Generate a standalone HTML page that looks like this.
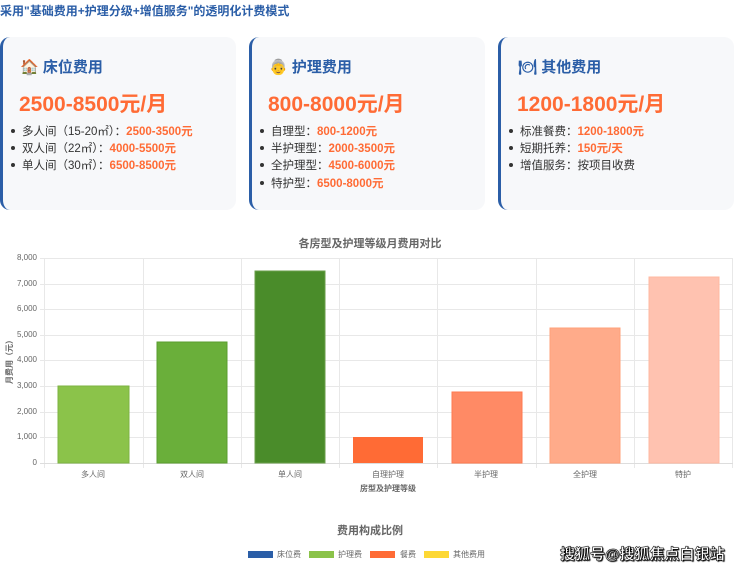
<!DOCTYPE html>
<html><head><meta charset="utf-8"><style>
*{margin:0;padding:0;box-sizing:border-box}
body{width:740px;height:568px;background:#fff;font-family:"Liberation Sans","Noto Sans CJK SC",sans-serif;position:relative;overflow:hidden}
.a{position:absolute;white-space:nowrap}
.top{left:0;top:2px;font-size:12px;color:#2b5ea7;font-weight:bold}
.card{position:absolute;top:37px;width:236px;height:173px;background:#f7f8fa;border-radius:10px;border-left:3px solid #2b5ea7}
.card h3{position:absolute;left:17px;top:19px;font-size:15px;color:#2b5ea7;font-weight:bold}
.card .p{position:absolute;left:16px;top:51px;font-size:21px;color:#ff6b35;font-weight:bold}
.card ul{position:absolute;left:17px;top:87px;list-style:none;font-size:11.5px;color:#333;line-height:17.2px}
.card li:before{content:"";display:inline-block;width:4px;height:4px;border-radius:2px;background:#333;margin:0 7px 2px -9px;vertical-align:middle}
.card li b{color:#ff6b35}
.yl{position:absolute;right:703px;font-size:8px;color:#666}
.xl{position:absolute;top:469px;font-size:8px;color:#666;width:98px;text-align:center}
.lg{position:absolute;top:551px;width:25px;height:7px}
.lt{position:absolute;top:549px;font-size:8px;color:#666}
</style></head><body>
<div class="a top">采用"基础费用+护理分级+增值服务"的透明化计费模式</div>

<div class="card" style="left:0">
<h3>🏠 床位费用</h3>
<div class="p">2500-8500元/月</div>
<ul><li>多人间（15-20㎡）：<b>2500-3500元</b></li><li>双人间（22㎡）：<b>4000-5500元</b></li><li>单人间（30㎡）：<b>6500-8500元</b></li></ul>
</div>
<div class="card" style="left:249px">
<h3>👵 护理费用</h3>
<div class="p">800-8000元/月</div>
<ul><li>自理型：<b>800-1200元</b></li><li>半护理型：<b>2000-3500元</b></li><li>全护理型：<b>4500-6000元</b></li><li>特护型：<b>6500-8000元</b></li></ul>
</div>
<div class="card" style="left:498px">
<h3>🍽 其他费用</h3>
<div class="p">1200-1800元/月</div>
<ul><li>标准餐费：<b>1200-1800元</b></li><li>短期托养：<b>150元/天</b></li><li>增值服务：按项目收费</li></ul>
</div>

<div class="a" style="left:0;width:740px;text-align:center;top:235px;font-size:11px;font-weight:bold;color:#666">各房型及护理等级月费用对比</div>

<svg class="a" style="left:0;top:0" width="740" height="568">
<g stroke="#e8e8e8" stroke-width="1">
<line x1="40" y1="258.5" x2="733" y2="258.5"/><line x1="40" y1="284.5" x2="733" y2="284.5"/><line x1="40" y1="309.5" x2="733" y2="309.5"/><line x1="40" y1="335.5" x2="733" y2="335.5"/><line x1="40" y1="360.5" x2="733" y2="360.5"/><line x1="40" y1="386.5" x2="733" y2="386.5"/><line x1="40" y1="412.5" x2="733" y2="412.5"/><line x1="40" y1="437.5" x2="733" y2="437.5"/>
<line x1="44.5" y1="258" x2="44.5" y2="468"/><line x1="143.5" y1="258" x2="143.5" y2="468"/><line x1="241.5" y1="258" x2="241.5" y2="468"/><line x1="339.5" y1="258" x2="339.5" y2="468"/><line x1="437.5" y1="258" x2="437.5" y2="468"/><line x1="536.5" y1="258" x2="536.5" y2="468"/><line x1="634.5" y1="258" x2="634.5" y2="468"/><line x1="732.5" y1="258" x2="732.5" y2="468"/>
</g>
<line x1="40" y1="463.5" x2="733" y2="463.5" stroke="#ddd"/>
<rect x="58" y="386" width="71" height="77" fill="#8bc34a" stroke="#7cb342"/>
<rect x="157" y="342" width="70" height="121" fill="#6aaf3a" stroke="#5a9e2f"/>
<rect x="255" y="271" width="70" height="192" fill="#4a8c2a" stroke="#6a9e4a"/>
<rect x="353" y="437" width="70" height="26" fill="#ff6b35"/>
<rect x="452" y="392" width="70" height="71" fill="#ff8a65" stroke="#ff7a50"/>
<rect x="550" y="328" width="70" height="135" fill="#ffab8a" stroke="#ffa07a"/>
<rect x="649" y="277" width="70" height="186" fill="#ffc2b0" stroke="#ffb8a0"/>
<text x="12" y="360" transform="rotate(-90 12 360)" font-size="8" fill="#666" font-weight="bold" text-anchor="middle" font-family="Liberation Sans,Noto Sans CJK SC,sans-serif">月费用（元）</text>
</svg>
<div class="yl" style="top:253px">8,000</div><div class="yl" style="top:279px">7,000</div><div class="yl" style="top:304px">6,000</div><div class="yl" style="top:330px">5,000</div><div class="yl" style="top:355px">4,000</div><div class="yl" style="top:381px">3,000</div><div class="yl" style="top:407px">2,000</div><div class="yl" style="top:432px">1,000</div><div class="yl" style="top:458px">0</div>
<div class="xl" style="left:44px">多人间</div><div class="xl" style="left:143px">双人间</div><div class="xl" style="left:241px">单人间</div><div class="xl" style="left:339px">自理护理</div><div class="xl" style="left:437px">半护理</div><div class="xl" style="left:536px">全护理</div><div class="xl" style="left:634px">特护</div>
<div class="a" style="left:339px;width:98px;text-align:center;top:483px;font-size:8px;font-weight:bold;color:#666">房型及护理等级</div>

<div class="a" style="left:0;width:740px;text-align:center;top:522px;font-size:11px;font-weight:bold;color:#666">费用构成比例</div>
<div class="lg" style="left:248px;background:#2b5ea7"></div><div class="lt" style="left:277px">床位费</div>
<div class="lg" style="left:309px;background:#8bc34a"></div><div class="lt" style="left:338px">护理费</div>
<div class="lg" style="left:370px;background:#ff6b35"></div><div class="lt" style="left:400px">餐费</div>
<div class="lg" style="left:424px;background:#fdd835"></div><div class="lt" style="left:453px">其他费用</div>
<div class="a" style="left:560px;top:543px;font-size:15px;color:#fff;font-weight:bold;-webkit-text-stroke:0.5px #000;text-shadow:0 0 1px #000,1px 1px 1px #000">搜狐号@搜狐焦点白银站</div>
</body></html>
